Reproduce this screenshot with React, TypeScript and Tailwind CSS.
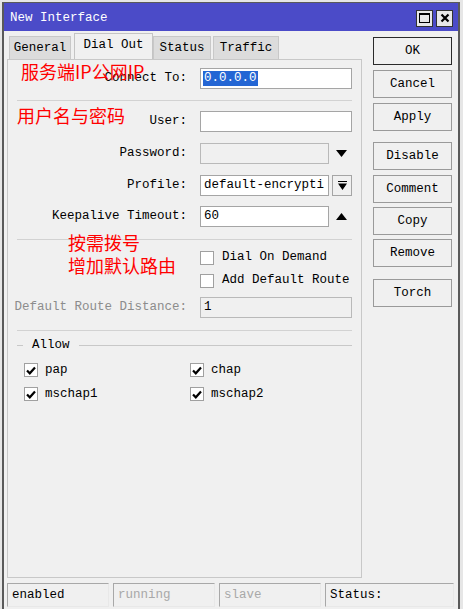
import React from 'react';

const ui = "font-['Liberation_Mono','DejaVu_Sans_Mono',monospace] text-[12.5px] leading-none text-black";
const cjk = "font-['Noto_Sans_CJK_SC',sans-serif] text-[18px] leading-[18px] text-[#ff0000]";

const Field: React.FC<{ value?: string; disabled?: boolean; width: string; children?: React.ReactNode }> = ({
  value,
  disabled,
  width,
  children,
}) => (
  <div
    className={`${width} h-[21px] flex items-center px-[3px] border ${
      disabled ? 'bg-[#f0f0f0] border-[#b9b9b9]' : 'bg-white border-[#a5a5a5]'
    }`}
  >
    {children ?? <span className="whitespace-nowrap overflow-hidden">{value}</span>}
  </div>
);

const Row: React.FC<{ label: string; className?: string; muted?: boolean; children: React.ReactNode }> = ({
  label,
  className = '',
  muted,
  children,
}) => (
  <div className={`flex items-center h-[21px] ${className}`}>
    <div className={`w-[181px] text-right whitespace-nowrap pr-[2px] ${muted ? 'text-[#8c8c8c]' : ''}`}>{label}</div>
    <div className="ml-[11px] flex items-center">{children}</div>
  </div>
);

const Check: React.FC<{ checked?: boolean }> = ({ checked }) => (
  <div className="w-[14px] h-[14px] border border-[#a0a0a0] bg-white flex items-center justify-center">
    {checked && (
      <svg width="10" height="9" viewBox="0 0 10 9">
        <path d="M1 4.5 L3.8 7.3 L9 1.5" stroke="#000" strokeWidth="2.2" fill="none" />
      </svg>
    )}
  </div>
);

const Sep: React.FC<{ className?: string }> = ({ className = '' }) => (
  <div className={`ml-[9px] w-[335px] h-px bg-[#d2d2d2] ${className}`} />
);

const SideButton: React.FC<{ label: string; className?: string; primary?: boolean }> = ({ label, className = '', primary }) => (
  <div
    className={`w-[79px] h-[28px] flex items-center justify-center bg-[#f0f0f0] border ${
      primary ? 'border-[#2a2a2a]' : 'border-[#9a9a9a]'
    } ${className}`}
  >
    {label}
  </div>
);

const StatusCell: React.FC<{ text: string; width: string; muted?: boolean }> = ({ text, width, muted }) => (
  <div
    className={`${width} h-[24px] flex items-center px-[4px] border border-t-[#a8a8a8] border-l-[#a8a8a8] border-r-[#e8e8e8] border-b-[#e8e8e8] ${
      muted ? 'text-[#a8a8a8]' : ''
    }`}
  >
    {text}
  </div>
);

export default function App() {
  return (
    <div className={`w-[463px] h-[609px] bg-[#e6e6e6] pt-[2px] pl-[2px] pr-[3px] ${ui}`}>
      <div className="relative h-[607px] border-l-[2px] border-r-[2px] border-t border-[#5a5a5a] bg-[#f0f0f0] flex flex-col">
        {/* Title */}
        <div className="h-[28px] bg-[#4b4bc8] flex items-center pl-[6px] pr-[5px] pt-[2px]">
          <span className="text-white">New Interface</span>
          <div className="ml-auto flex gap-[3px]">
            <div className="w-[17px] h-[17px] bg-[#e8e8e8] border border-[#333] flex items-center justify-center">
              <div className="w-[11px] h-[10px] border-[1.5px] border-black border-t-[2px]" />
            </div>
            <div className="w-[17px] h-[17px] bg-[#e8e8e8] border border-[#333] flex items-center justify-center">
              <svg width="10" height="10" viewBox="0 0 10 10">
                <path d="M1.5 1.5 L8.5 8.5 M8.5 1.5 L1.5 8.5" stroke="#000" strokeWidth="2.2" />
              </svg>
            </div>
          </div>
        </div>

        <div className="flex flex-1">
          {/* Left: tabs and panel */}
          <div className="ml-[3px] w-[355px] flex flex-col">
            <div className="flex items-end h-[28px] pl-[2px]">
              <div className="w-[62px] h-[23px] bg-[#dcdcdc] border border-b-0 border-[#c8c8c8] flex items-center justify-center">
                General
              </div>
              <div className="ml-[3px] w-[79px] h-[26px] bg-[#f0f0f0] border border-b-0 border-[#c4c4c4] flex items-center justify-center pb-[3px]">
                Dial Out
              </div>
              <div className="w-[58px] h-[23px] bg-[#dcdcdc] border border-b-0 border-[#c8c8c8] flex items-center justify-center">
                Status
              </div>
              <div className="ml-[2px] w-[66px] h-[23px] bg-[#dcdcdc] border border-b-0 border-[#c8c8c8] flex items-center justify-center">
                Traffic
              </div>
            </div>
            <div className="h-[519px] border border-[#c8c8c8] bg-[#f0f0f0] flex flex-col">
              <Row label="Connect To:" className="mt-[8px]">
                <div className="w-[152px] h-[21px] bg-white border border-[#a5a5a5] flex items-center px-[2px]">
                  <span className="bg-[#2466d4] text-white px-[1px] leading-[15px]">0.0.0.0</span>
                </div>
              </Row>
              <Sep className="mt-[11px]" />
              <Row label="User:" className="mt-[10px]">
                <Field width="w-[152px]" />
              </Row>
              <Row label="Password:" className="mt-[11px]">
                <Field width="w-[129px]" disabled />
                <svg className="ml-[7px]" width="11" height="7" viewBox="0 0 11 7">
                  <path d="M0 0 L11 0 L5.5 7 Z" fill="#000" />
                </svg>
              </Row>
              <Row label="Profile:" className="mt-[11px]">
                <Field width="w-[129px]" value="default-encrypti" />
                <div className="ml-[3px] w-[20px] h-[21px] border border-[#a5a5a5] bg-[#f0f0f0] flex items-center justify-center">
                  <svg width="9" height="10" viewBox="0 0 9 10">
                    <path d="M0 0.5 L9 0.5 M1 3 L8 3 L4.5 8 Z M4.5 3 L4.5 8" stroke="#000" strokeWidth="1.2" fill="#000" />
                  </svg>
                </div>
              </Row>
              <Row label="Keepalive Timeout:" className="mt-[10px]">
                <Field width="w-[129px]" value="60" />
                <svg className="ml-[7px]" width="11" height="7" viewBox="0 0 11 7">
                  <path d="M0 7 L11 7 L5.5 0 Z" fill="#000" />
                </svg>
              </Row>
              <Sep className="mt-[12px]" />
              <div className="flex items-center h-[15px] mt-[10px] ml-[192px]">
                <Check />
                <span className="ml-[8px]">Dial On Demand</span>
              </div>
              <div className="flex items-center h-[15px] mt-[8px] ml-[192px]">
                <Check />
                <span className="ml-[8px]">Add Default Route</span>
              </div>
              <Row label="Default Route Distance:" muted className="mt-[9px]">
                <Field width="w-[152px]" value="1" disabled />
              </Row>
              <Sep className="mt-[12px]" />
              <div className="flex items-center h-[14px] mt-[7px] ml-[9px]">
                <div className="w-[6px] h-px bg-[#c8c8c8]" />
                <span className="ml-[9px]">Allow</span>
                <div className="ml-[9px] flex-1 mr-[9px] h-px bg-[#c8c8c8]" />
              </div>
              <div className="grid grid-cols-[166px_1fr] ml-[16px] mt-[11px] gap-y-[10px]">
                <div className="flex items-center h-[14px]">
                  <Check checked />
                  <span className="ml-[7px]">pap</span>
                </div>
                <div className="flex items-center h-[14px]">
                  <Check checked />
                  <span className="ml-[7px]">chap</span>
                </div>
                <div className="flex items-center h-[14px]">
                  <Check checked />
                  <span className="ml-[7px]">mschap1</span>
                </div>
                <div className="flex items-center h-[14px]">
                  <Check checked />
                  <span className="ml-[7px]">mschap2</span>
                </div>
              </div>
            </div>
          </div>

          {/* Right buttons */}
          <div className="ml-[11px] mt-[6px] flex flex-col">
            <SideButton label="OK" primary />
            <SideButton label="Cancel" className="mt-[5px]" />
            <SideButton label="Apply" className="mt-[5px]" />
            <SideButton label="Disable" className="mt-[11px]" />
            <SideButton label="Comment" className="mt-[5px]" />
            <SideButton label="Copy" className="mt-[4px]" />
            <SideButton label="Remove" className="mt-[4px]" />
            <SideButton label="Torch" className="mt-[12px]" />
          </div>
        </div>

        {/* Status bar */}
        <div className="flex gap-[4px] pl-[3px] mb-[2px]">
          <StatusCell text="enabled" width="w-[102px]" />
          <StatusCell text="running" width="w-[102px]" muted />
          <StatusCell text="slave" width="w-[102px]" muted />
          <StatusCell text="Status:" width="w-[129px]" />
        </div>

        {/* Annotations */}
        <div className={`absolute left-[17px] top-[59px] ${cjk}`}>服务端IP公网IP</div>
        <div className={`absolute left-[13px] top-[103px] ${cjk}`}>用户名与密码</div>
        <div className={`absolute left-[64px] top-[228px] ${cjk} leading-[23px]`}>
          按需拨号
          <br />
          增加默认路由
        </div>
      </div>
    </div>
  );
}
